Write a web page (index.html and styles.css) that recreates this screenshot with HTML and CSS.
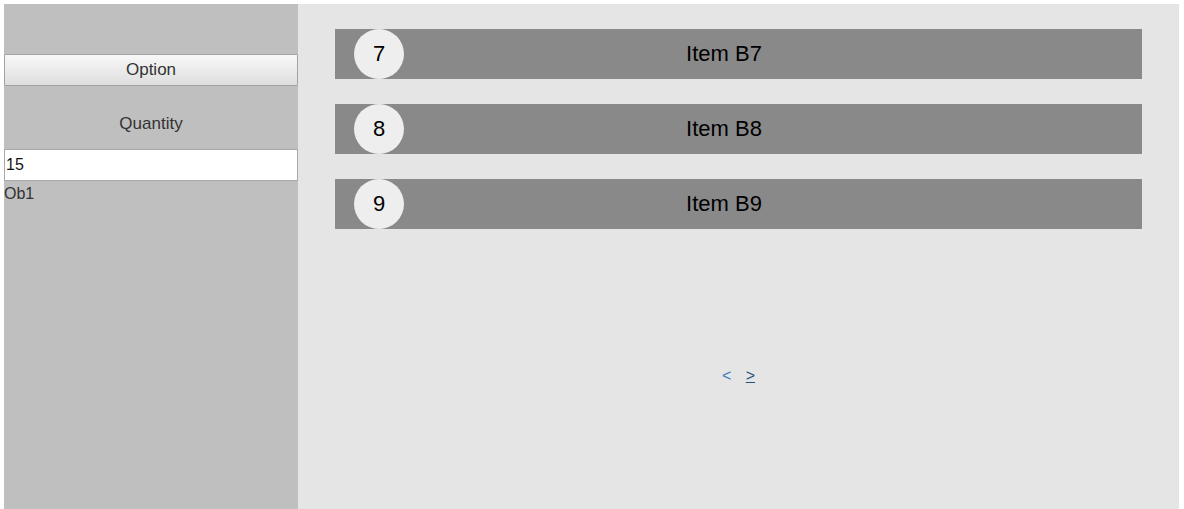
FILE: index.html
```html
<!DOCTYPE html>
<html>
<head>
<meta charset="utf-8">
<link rel="stylesheet" href="styles.css">
</head>
<body>
<div class="app">
  <aside class="sidebar">
    <button class="option-btn">Option</button>
    <div class="qty-label">Quantity</div>
    <input class="qty-input" type="text" value="15">
    <div class="ob">Ob1</div>
  </aside>
  <main class="main">
    <div class="list">
      <div class="bar"><span class="circle">7</span><span class="label">Item B7</span></div>
      <div class="bar"><span class="circle">8</span><span class="label">Item B8</span></div>
      <div class="bar"><span class="circle">9</span><span class="label">Item B9</span></div>
    </div>
    <div class="pager">
      <span class="prev">&lt;</span>
      <a class="next" href="#">&gt;</a>
    </div>
  </main>
</div>
</body>
</html>
```
FILE: styles.css
```css
html, body {
  margin: 0;
  padding: 0;
  background: #ffffff;
}
body {
  padding: 4px 5px 0 4px;
  font-family: "Liberation Sans", Arial, sans-serif;
  color: #333;
}
.app {
  display: flex;
  height: 505px;
}
.sidebar {
  width: 294px;
  flex: none;
  background: #bfbfbf;
  display: flex;
  flex-direction: column;
  padding-top: 50px;
  box-sizing: border-box;
}
.option-btn {
  height: 32px;
  width: 100%;
  margin: 0;
  border: 1px solid #a3a3a3;
  border-radius: 1px;
  background: linear-gradient(#f8f8f8, #dedede);
  font-family: "Liberation Sans", Arial, sans-serif;
  font-size: 17px;
  color: #333;
  padding: 0;
}
.qty-label {
  text-align: center;
  font-size: 17px;
  color: #333;
  height: 63px;
  line-height: 76px;
}
.qty-input {
  height: 32px;
  box-sizing: border-box;
  width: 100%;
  margin: 0;
  border: 1px solid #a9a9a9;
  background: #fff;
  padding: 0 1px;
  font-family: "Liberation Sans", Arial, sans-serif;
  font-size: 16px;
  color: #111;
  outline: none;
}
.ob {
  font-size: 16px;
  line-height: 26px;
  color: #333;
}
.main {
  flex: 1;
  background: #e5e5e5;
  padding: 25px 37px 0 37px;
  display: flex;
  flex-direction: column;
}
.list {
  display: flex;
  flex-direction: column;
  gap: 25px;
}
.bar {
  height: 50px;
  background: #898989;
  display: flex;
  align-items: center;
  padding-left: 19px;
  padding-right: 98px;
}
.circle {
  width: 50px;
  height: 50px;
  border-radius: 50%;
  background: #eeeeee;
  color: #000;
  font-size: 22px;
  display: flex;
  align-items: center;
  justify-content: center;
  flex: none;
}
.label {
  flex: 1;
  text-align: center;
  font-size: 22px;
  color: #000;
}
.pager {
  margin-top: 138px;
  text-align: center;
  font-size: 16px;
  color: #337ab7;
}
.prev {
  margin-right: 10px;
}
.next {
  color: #23527c;
  text-decoration: underline;
}
```
